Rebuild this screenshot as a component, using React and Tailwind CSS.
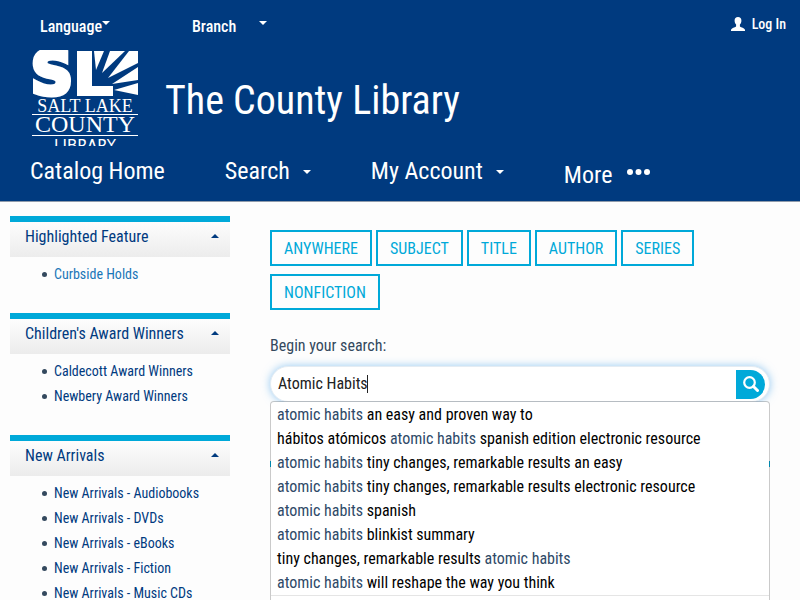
import React from "react";

const panels = [
  { title: "Highlighted Feature", links: ["Curbside Holds"], light: true },
  { title: "Children's Award Winners", links: ["Caldecott Award Winners", "Newbery Award Winners"] },
  {
    title: "New Arrivals",
    links: [
      "New Arrivals - Audiobooks",
      "New Arrivals - DVDs",
      "New Arrivals - eBooks",
      "New Arrivals - Fiction",
      "New Arrivals - Music CDs",
    ],
  },
];

const fields = ["ANYWHERE", "SUBJECT", "TITLE", "AUTHOR", "SERIES", "NONFICTION"];

const suggestions = [
  ["", " an easy and proven way to"],
  ["hábitos atómicos ", " spanish edition electronic resource"],
  ["", " tiny changes, remarkable results an easy"],
  ["", " tiny changes, remarkable results electronic resource"],
  ["", " spanish"],
  ["", " blinkist summary"],
  ["tiny changes, remarkable results ", ""],
  ["", " will reshape the way you think"],
];

function Caret({ up = false }) {
  return (
    <svg className="h-1 w-2 shrink-0" viewBox="0 0 8 4" fill="currentColor" aria-hidden="true">
      {up ? <path d="M0 4 4 0l4 4z" /> : <path d="M0 0h8L4 4z" />}
    </svg>
  );
}

function Logo() {
  return (
    <svg className="h-24 w-[106px] shrink-0" viewBox="0 0 106 96" fill="#fff" role="img" aria-label="Salt Lake County Library">
      <text x="-1" y="44" fontFamily="DejaVu Sans" fontWeight="700" fontSize="58" stroke="#fff" strokeWidth="5">S</text>
      <text x="40" y="46" fontFamily="DejaVu Sans" fontWeight="700" fontSize="61">L</text>
      <path d="M45 1h15v35h21v10H45z" />
      <path d="M62 1h10L64 20z" />
      <path d="M78 1h15L70 23z" />
      <path d="M97 1h9v12L76 28z" />
      <path d="M106 17v13L80 34z" />
      <path d="M106 33v12L82 40z" />
      <text x="53" y="62" textAnchor="middle" fontFamily="Liberation Serif" fontSize="18">SALT LAKE</text>
      <path d="M0 64h106v1H0z" />
      <text x="53" y="82" textAnchor="middle" fontFamily="Liberation Serif" fontSize="24">COUNTY</text>
      <path d="M0 85h106v1H0z" />
      <text x="53" y="101" textAnchor="middle" fontFamily="DejaVu Sans" fontSize="15">LIBRARY</text>
    </svg>
  );
}

export default function App() {
  return (
    <div className="h-screen overflow-hidden bg-[#fdfdfd] font-['Roboto_Condensed','Liberation_Sans_Narrow',sans-serif] text-base text-[#34495e]">
      <header className="border-b border-[#8f9bab] bg-[#003a7f] pb-1 text-white">
        <div className="flex h-[50px] items-start pt-[15px] pr-[14px] pl-10 font-medium">
          <button className="flex w-[152px] items-start leading-6">
            Language
            <span className="pt-[6px]"><Caret /></span>
          </button>
          <button className="flex items-start gap-[23px] leading-6">
            Branch
            <span className="pt-[6px]"><Caret /></span>
          </button>
          <a href="#login" className="ml-auto flex items-center gap-[7px] text-sm leading-[18px]">
            <svg className="h-[14px] w-[14px]" viewBox="0 0 14 14" fill="currentColor" aria-hidden="true">
              <path d="M7 0C4.800 0 3.600 1.400 3.600 3.400c0 1.500.5 3.200 1.500 4.200v1.300c0 .7-.5 1-1.300 1.300C1.700 11 0 11.700 0 13v1h14v-1c0-1.300-1.700-2-3.800-2.800-.8-.3-1.300-.6-1.300-1.300V7.600c1-1 1.500-2.700 1.500-4.200C10.400 1.400 9.200 0 7 0z" />
            </svg>
            Log In
          </a>
        </div>
        <div className="flex items-center gap-[27px] pl-8">
          <Logo />
          <h1 className="pt-[6px] text-[40px] leading-[48px]">The County Library</h1>
        </div>
        <nav className="flex items-center gap-[60px] pl-[30px] text-2xl leading-[43px]">
          <a href="#home">Catalog Home</a>
          <button className="flex items-center gap-[13px]">Search <Caret /></button>
          <button className="flex items-center gap-[13px]">My Account <Caret /></button>
          <button className="flex items-center gap-[15px] pt-2">
            More
            <svg className="mb-2 h-[6px] w-[23px]" viewBox="0 0 23 6" fill="currentColor" aria-hidden="true">
              <circle cx="3" cy="3" r="3" />
              <circle cx="11.500" cy="3" r="3" />
              <circle cx="20" cy="3" r="3" />
            </svg>
          </button>
        </nav>
      </header>

      <div className="flex items-start gap-10 pt-[14px] pr-[30px] pl-[10px]">
        <aside className="w-[220px] shrink-0">
          {panels.map((p) => (
            <section key={p.title}>
              <button className="flex h-[41px] w-full items-start justify-between border-t-[6px] border-[#00a9d9] bg-linear-to-b from-[#fdfdfd] to-[#ececec] pt-[3px] pr-[11px] pl-[15px] leading-6 text-[#003a7f]">
                {p.title}
                <span className="pt-[9px]"><Caret up /></span>
              </button>
              <ul className="pt-[5px] pb-[26px] pl-8 text-sm leading-[25px]">
                {p.links.map((l) => (
                  <li key={l} className="flex items-center gap-[7px] before:size-[5px] before:rounded-full before:bg-[#34495e] before:content-['']">
                    <a href="#list" className={p.light ? "text-[#1a76b8]" : "text-[#003a7f]"}>{l}</a>
                  </li>
                ))}
              </ul>
            </section>
          ))}
        </aside>

        <main className="min-w-0 flex-1 pt-[14px]">
          <div className="flex flex-wrap gap-x-1 gap-y-2">
            {fields.map((f) => (
              <button key={f} className="h-9 border-2 border-[#00a9d9] px-3 pt-0.5 text-[#00a9d9]">{f}</button>
            ))}
          </div>
          <form className="relative mt-6" onSubmit={(e) => e.preventDefault()}>
            <label htmlFor="query" className="block leading-6">Begin your search:</label>
            <div className="relative mt-2 flex h-9 items-center rounded-full border border-[#e4ecf3] bg-white pr-1 pl-[7px] shadow-[0_0_8px_rgba(82,168,236,0.6)]">
              <input id="query" defaultValue="Atomic Habits" className="min-w-0 flex-1 bg-transparent text-[#222] caret-transparent outline-none" />
              <span className="absolute top-2 left-[96px] h-[18px] w-px bg-[#222]" aria-hidden="true" />
              <button aria-label="Search" className="flex h-[29px] w-[29px] items-center justify-center rounded-r-full bg-[#00a9d9] text-white">
                <svg className="h-4 w-4" viewBox="0 0 16 16" fill="none" stroke="currentColor" aria-hidden="true">
                  <circle cx="6.500" cy="6.500" r="5.300" strokeWidth="2.200" />
                  <path d="m10.500 10.500 4 4" strokeWidth="3" strokeLinecap="round" />
                </svg>
              </button>
            </div>
            <div className="mt-[59px] h-[6px] bg-[#00a9d9]" />
            <div className="absolute top-[67px] w-full rounded border border-black/20 bg-white bg-clip-padding pb-4 text-black">
              <ul className="border-b border-[#e5e5e5] px-[6px] pt-px leading-6">
                {suggestions.map(([before, after], i) => (
                  <li key={i}>
                    {before}
                    <span className="text-[#2f4a68]">atomic habits</span>
                    {after}
                  </li>
                ))}
              </ul>
            </div>
          </form>
        </main>
      </div>
    </div>
  );
}
